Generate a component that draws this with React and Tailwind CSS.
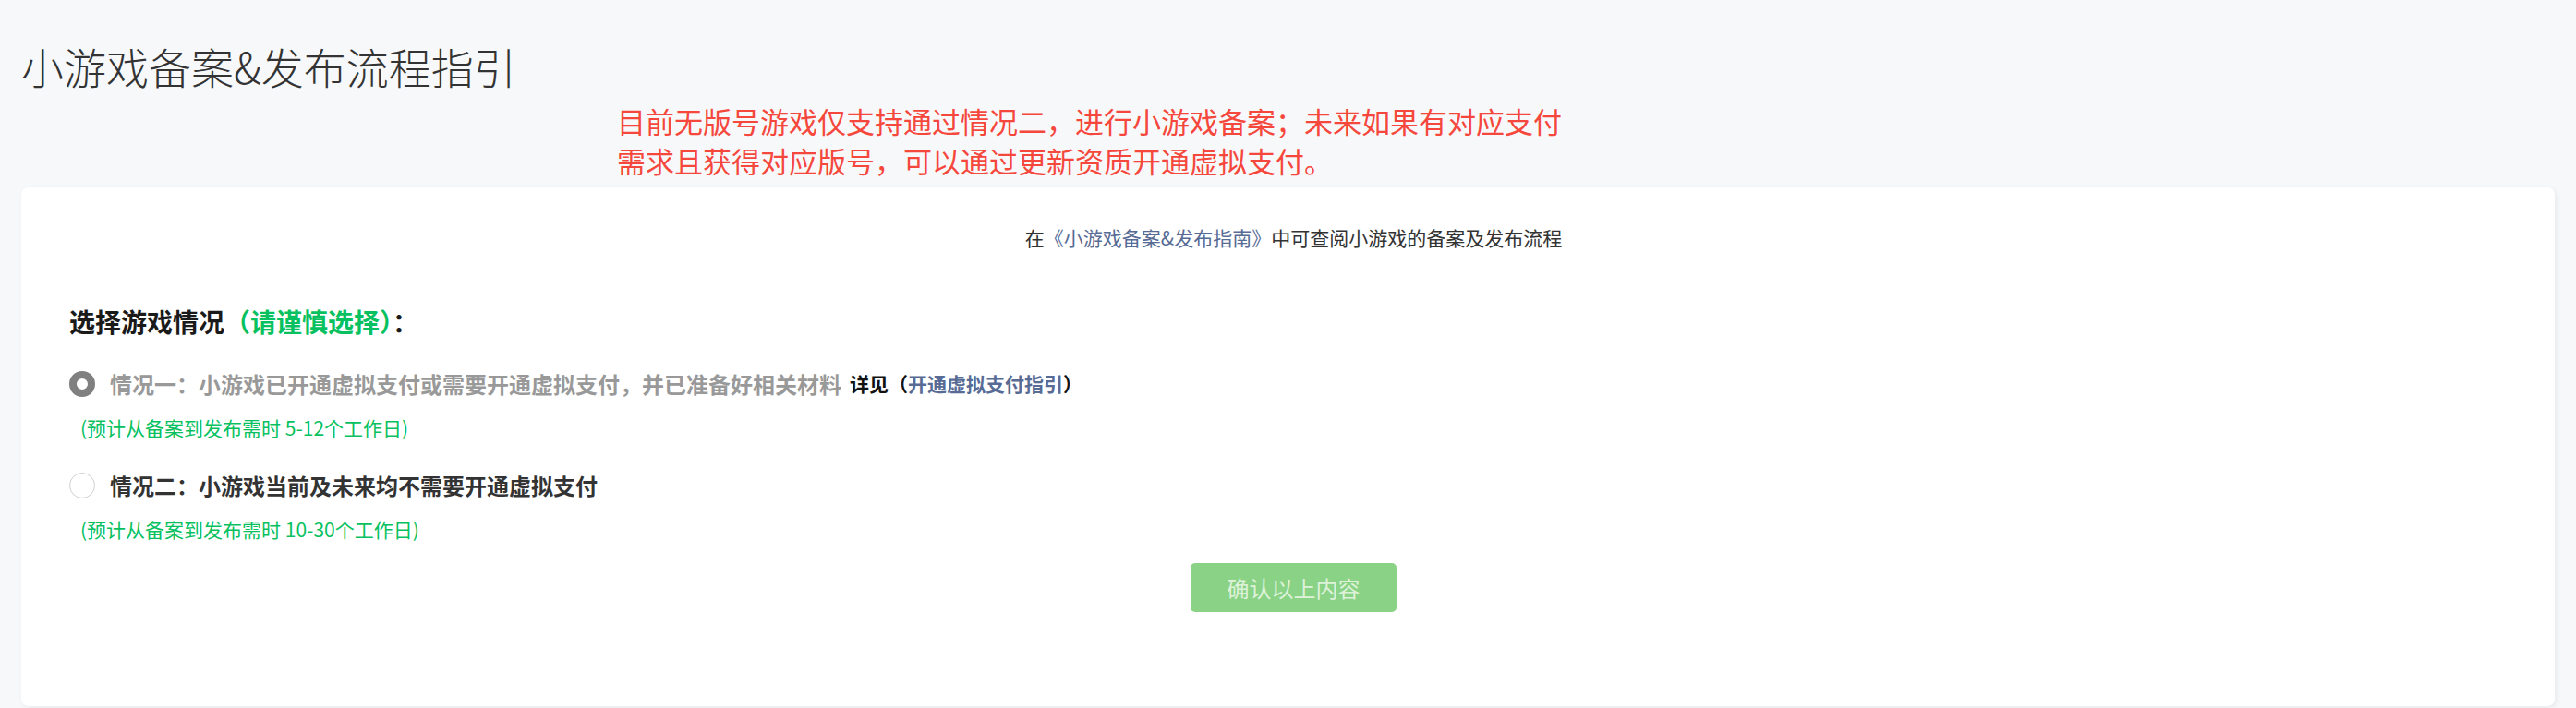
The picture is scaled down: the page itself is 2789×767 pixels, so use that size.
import React from "react";

const FONT = {
  fontFamily:
    '"Noto Sans CJK SC", "Noto Sans", "Liberation Sans", sans-serif',
};

const Option = ({ checked, label, labelClass, extra, estimate }) => (
  <div>
    <div className="flex items-center h-[40px]">
      {checked ? (
        <span className="w-[28px] h-[28px] rounded-full border-[8px] border-[#808080] bg-white shrink-0" />
      ) : (
        <span className="w-[28px] h-[28px] rounded-full border border-[#d0d0d0] bg-white shrink-0" />
      )}
      <span className={`ml-[16px] text-[24px] font-bold ${labelClass}`}>
        {label}
      </span>
      {extra}
    </div>
    <p className="mt-[12px] ml-[12px] text-[21px] leading-[30px] text-[#07c160]">
      {estimate}
    </p>
  </div>
);

export default function App() {
  return (
    <div
      className="w-full h-[767px] bg-[#f7f8fa] px-[23px] flex flex-col overflow-hidden"
      style={FONT}
    >
      {/* Header */}
      <h1 className="pt-[37px] text-[46px] leading-[69px] font-light text-[#333333]">
        小游戏备案&amp;发布流程指引
      </h1>
      <p className="ml-[645px] mt-[3px] text-[31px] leading-[43px] text-[#f5473c]">
        目前无版号游戏仅支持通过情况二，进行小游戏备案；未来如果有对应支付
        <br />
        需求且获得对应版号，可以通过更新资质开通虚拟支付。
      </p>

      {/* Card */}
      <div className="mt-[8px] flex-1 mb-[2px] bg-white rounded-[8px] shadow-[2px_2px_6px_rgba(0,0,0,0.06)] pt-[39px] pl-[64px] pr-[52px]">
        <p className="text-center text-[21px] leading-[30px] text-[#333333]">
          在<span className="text-[#576b95]">《小游戏备案&amp;发布指南》</span>
          中可查阅小游戏的备案及发布流程
        </p>

        <div className="-ml-[12px]">
          <h2 className="mt-[56px] text-[28px] leading-[40px] font-bold text-[#1a1a1a]">
            选择游戏情况<span className="text-[#07c160]">（请谨慎选择）</span>：
          </h2>

          <div className="mt-[28px]">
            <Option
              checked
              label="情况一：小游戏已开通虚拟支付或需要开通虚拟支付，并已准备好相关材料"
              labelClass="text-[#999999]"
              extra={
                <span className="ml-[9px] text-[21px] font-bold text-[#111111]">
                  详见（<span className="text-[#576b95]">开通虚拟支付指引</span>）
                </span>
              }
              estimate="(预计从备案到发布需时 5-12个工作日)"
            />
          </div>

          <div className="mt-[28px]">
            <Option
              label="情况二：小游戏当前及未来均不需要开通虚拟支付"
              labelClass="text-[#333333]"
              estimate="(预计从备案到发布需时 10-30个工作日)"
            />
          </div>
        </div>

        <div className="mt-[22px] flex justify-center">
          <button className="w-[223px] h-[53px] rounded-[5px] bg-[#8ad286] text-[24px] text-[#def2da]">
            确认以上内容
          </button>
        </div>
      </div>
    </div>
  );
}
